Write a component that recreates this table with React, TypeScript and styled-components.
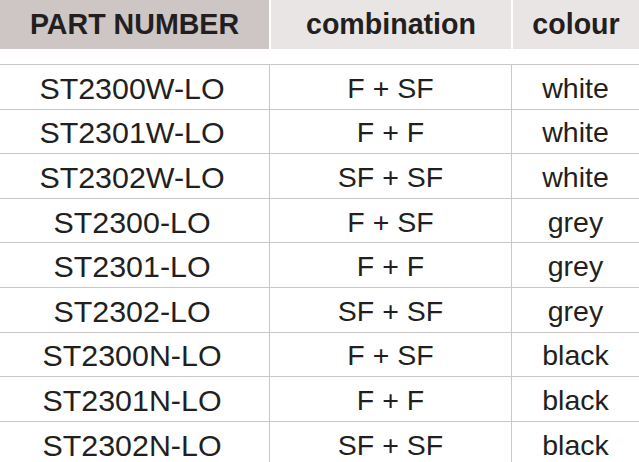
import React from "react";
import styled, { createGlobalStyle } from "styled-components";

const Global = createGlobalStyle`
  html, body { margin: 0; padding: 0; background: #ffffff; }
  body { font-family: "Liberation Sans", Arial, sans-serif; color: #231f20; }
`;

const Page = styled.div`
  width: 639px;
  height: 462px;
  overflow: hidden;
  background: #ffffff;
`;

const HeaderRow = styled.div`
  display: grid;
  grid-template-columns: 269px 240px 126px;
  column-gap: 2px;
  height: 49px;
`;

const HeadCell = styled.div<{ $dark?: boolean }>`
  display: flex;
  align-items: center;
  justify-content: center;
  background: ${(p) => (p.$dark ? "#cdc6c5" : "#e9e5e4")};
  font-weight: 700;
  font-size: 28.6px;
  color: #231f20;
  padding-bottom: 1px;
`;

const Spacer = styled.div`
  height: 15px;
`;

const Body = styled.div`
  display: flex;
  flex-direction: column;
`;

const Row = styled.div`
  display: grid;
  grid-template-columns: 269px 242px 128px;
  height: 44.6px;
  border-top: 1.5px solid #cbc7c7;
  box-sizing: border-box;
`;

const Cell = styled.div<{ $divider?: boolean; $big?: boolean }>`
  display: flex;
  align-items: center;
  justify-content: center;
  font-size: ${(p) => (p.$big ? "30.4px" : "28.5px")};
  color: #231f20;
  padding-top: 3px;
  padding-right: ${(p) => (p.$big ? "5px" : "0")};
  border-left: ${(p) => (p.$divider ? "1.5px solid #cbc7c7" : "none")};
`;

const rows: [string, string, string][] = [
  ["ST2300W-LO", "F + SF", "white"],
  ["ST2301W-LO", "F + F", "white"],
  ["ST2302W-LO", "SF + SF", "white"],
  ["ST2300-LO", "F + SF", "grey"],
  ["ST2301-LO", "F + F", "grey"],
  ["ST2302-LO", "SF + SF", "grey"],
  ["ST2300N-LO", "F + SF", "black"],
  ["ST2301N-LO", "F + F", "black"],
  ["ST2302N-LO", "SF + SF", "black"],
];

export default function App() {
  return (
    <Page>
      <Global />
      <HeaderRow>
        <HeadCell $dark>PART NUMBER</HeadCell>
        <HeadCell>combination</HeadCell>
        <HeadCell>colour</HeadCell>
      </HeaderRow>
      <Spacer />
      <Body>
        {rows.map(([part, combo, colour]) => (
          <Row key={part}>
            <Cell $big>{part}</Cell>
            <Cell $divider>{combo}</Cell>
            <Cell $divider>{colour}</Cell>
          </Row>
        ))}
      </Body>
    </Page>
  );
}
